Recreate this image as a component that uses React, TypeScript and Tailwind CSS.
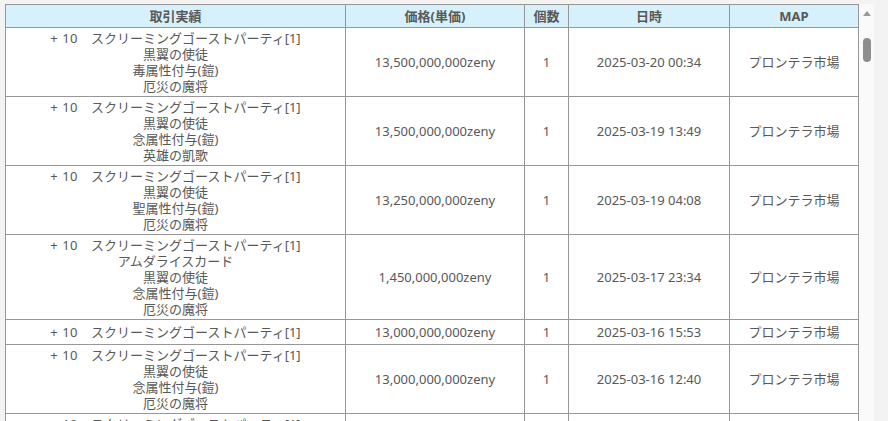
interface Trade {
  id: number;
  options: string[];
  price: string;
  count: number;
  date: string;
  map: string;
}

const ITEM = "+ 10\u3000スクリーミングゴーストパーティ[1]";

const trades: Trade[] = [
  { id: 1, options: ["黒翼の使徒", "毒属性付与(鎧)", "厄災の魔将"], price: "13,500,000,000zeny", count: 1, date: "2025-03-20 00:34", map: "プロンテラ市場" },
  { id: 2, options: ["黒翼の使徒", "念属性付与(鎧)", "英雄の凱歌"], price: "13,500,000,000zeny", count: 1, date: "2025-03-19 13:49", map: "プロンテラ市場" },
  { id: 3, options: ["黒翼の使徒", "聖属性付与(鎧)", "厄災の魔将"], price: "13,250,000,000zeny", count: 1, date: "2025-03-19 04:08", map: "プロンテラ市場" },
  { id: 4, options: ["アムダライスカード", "黒翼の使徒", "念属性付与(鎧)", "厄災の魔将"], price: "1,450,000,000zeny", count: 1, date: "2025-03-17 23:34", map: "プロンテラ市場" },
  { id: 5, options: [], price: "13,000,000,000zeny", count: 1, date: "2025-03-16 15:53", map: "プロンテラ市場" },
  { id: 6, options: ["黒翼の使徒", "念属性付与(鎧)", "厄災の魔将"], price: "13,000,000,000zeny", count: 1, date: "2025-03-16 12:40", map: "プロンテラ市場" },
  { id: 7, options: ["黒翼の使徒", "念属性付与(鎧)", "厄災の魔将"], price: "13,000,000,000zeny", count: 1, date: "2025-03-16 09:12", map: "プロンテラ市場" },
];

const th = "border border-[#979797] bg-[#d6f0fc] font-bold text-center h-[23px] p-0";
const td = "border border-[#979797] text-center align-middle h-[25px] px-1 py-[2px]";

const App = () => {
  return (
    <div
      className="h-[421px] w-[888px] overflow-hidden bg-[#f3f3f3] pl-[5px] pt-[4px] text-[13px] leading-[16px] text-[#585858]"
      style={{ fontFamily: '"Noto Sans", "Noto Sans CJK JP", sans-serif' }}
    >
      <div className="flex">
        <table className="w-[853px] table-fixed border-collapse bg-white">
          <colgroup>
            <col className="w-[340px]" />
            <col className="w-[179px]" />
            <col className="w-[44px]" />
            <col className="w-[161px]" />
            <col className="w-[129px]" />
          </colgroup>
          <thead>
            <tr>
              <th className={th}>取引実績</th>
              <th className={th}>価格(単価)</th>
              <th className={th}>個数</th>
              <th className={th}>日時</th>
              <th className={th}>MAP</th>
            </tr>
          </thead>
          <tbody>
            {trades.map((t) => (
              <tr key={t.id}>
                <td className={td}>
                  <div>
                    <span className="tracking-[0.5px]">+ 10</span>
                    {ITEM.slice(4)}
                  </div>
                  {t.options.map((o, i) => (
                    <div key={i}>{o}</div>
                  ))}
                </td>
                <td className={td}>{t.price}</td>
                <td className={td}>{t.count}</td>
                <td className={td}>{t.date}</td>
                <td className={td}>{t.map}</td>
              </tr>
            ))}
          </tbody>
        </table>

        {/* scrollbar */}
        <div className="flex h-[417px] w-[15px] shrink-0 flex-col items-center bg-[#fafafa]">
          <svg width="8" height="5" viewBox="0 0 8 5" className="mt-[7px]">
            <path d="M0 5 L4 0 L8 5 Z" fill="#9a9a9a" />
          </svg>
          <div className="mt-[22px] h-[24px] w-[8px] rounded-full bg-[#8e8e8e]" />
        </div>
      </div>
    </div>
  );
};

export default App;
